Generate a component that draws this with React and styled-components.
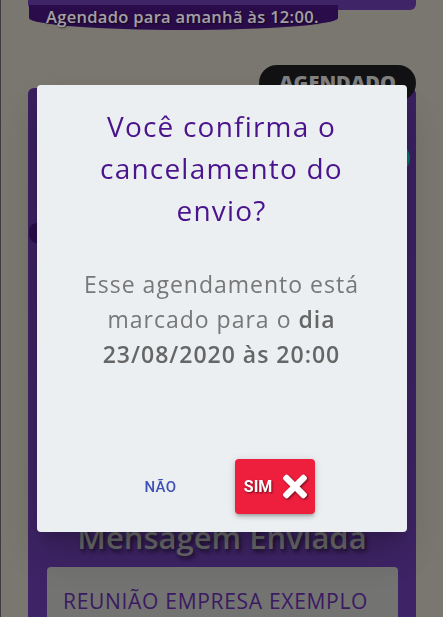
import React from 'react'
import styled, { createGlobalStyle } from 'styled-components'
import { FaTimes } from 'react-icons/fa'

const GlobalStyle = createGlobalStyle`
  html, body {
    margin: 0;
    height: 617px;
    overflow: hidden;
    font-family: "Open Sans", "Noto Sans", sans-serif;
  }
`

// página de fundo (lista de agendamentos)
const Page = styled.div`
  height: 617px;
  overflow: hidden;
  box-sizing: border-box;
  background: #b4afa6;
  border-left: 1px solid #5a5a5a;
  padding: 0 27px 0 27px;
  display: flex;
  flex-direction: column;
`

const CardTail = styled.div`
  flex-shrink: 0;
  height: 10px;
  background: #5d3698;
  border-radius: 0 0 6px 6px;
`

const ScheduleTag = styled.div`
  flex-shrink: 0;
  align-self: flex-start;
  margin: -5px 0 0 1px;
  width: 309px;
  height: 25px;
  box-sizing: border-box;
  padding-left: 17px;
  background: #3e136d;
  border-radius: 0 0 155px 155px / 0 0 12px 12px;
  color: #f2eaf2;
  font-size: 16.5px;
  font-weight: 600;
  line-height: 23px;
  letter-spacing: 0.3px;
  text-shadow: 1px 1px 2px rgba(0, 0, 0, 0.6);
  white-space: nowrap;
`

const Card = styled.section`
  flex-shrink: 0;
  position: relative;
  margin-top: 58px;
  height: 560px;
  background: linear-gradient(#532f8c, #5d3598);
  border-radius: 6px 6px 0 0;
  display: flex;
  flex-direction: column;
`

const StatusBadge = styled.div`
  position: absolute;
  top: -23px;
  right: 0;
  width: 157px;
  height: 36px;
  border-radius: 18px;
  background: #1a1a1c;
  color: #bdbdbd;
  font-size: 20px;
  font-weight: 800;
  text-align: center;
  line-height: 36px;
`

const RoundButton = styled.div`
  flex-shrink: 0;
  align-self: flex-end;
  margin: 55px 6px 0 0;
  width: 30px;
  height: 30px;
  border-radius: 50%;
  background: #12a0a0;
`

const InnerTag = styled.div`
  flex-shrink: 0;
  align-self: flex-start;
  margin: 50px 0 0 1px;
  width: 150px;
  height: 20px;
  border-radius: 8px;
  background: #3e136d;
`

const CardTitle = styled.h2`
  flex-shrink: 0;
  margin: 274px 0 0;
  text-align: center;
  font-size: 31px;
  font-weight: 600;
  line-height: 40px;
  color: #989898;
  text-shadow: 2px 3px 4px rgba(0, 0, 0, 0.6);
`

const MessageBox = styled.div`
  flex-shrink: 0;
  margin: 10px 18px 0 19px;
  height: 80px;
  padding: 20px 16px 0;
  background: #aaaaa9;
  border-radius: 4px;
  color: #57278f;
  font-size: 21px;
  letter-spacing: 0.7px;
  white-space: nowrap;
`

// diálogo de confirmação
const Overlay = styled.div`
  position: fixed;
  inset: 0;
  background: rgba(0, 0, 0, 0.32);
  display: flex;
  align-items: center;
  justify-content: center;
`

const Dialog = styled.div`
  width: 370px;
  box-sizing: border-box;
  padding: 20px 24px 18px;
  background: #eceff1;
  border-radius: 4px;
  box-shadow: 0 11px 15px -7px rgba(0, 0, 0, 0.2), 0 24px 38px 3px rgba(0, 0, 0, 0.14);
  text-align: center;
`

const Title = styled.h1`
  margin: 0;
  color: #4a148c;
  font-size: 28px;
  font-weight: 500;
  line-height: 42px;
  letter-spacing: 1.2px;
`

const Body = styled.p`
  margin: 36px 0 0;
  color: #777777;
  font-size: 23px;
  font-weight: 400;
  line-height: 35px;
  letter-spacing: 1px;

  strong {
    font-weight: 600;
    color: #666666;
  }
`

const Actions = styled.div`
  margin-top: 87px;
  display: flex;
  justify-content: center;
  align-items: center;
  gap: 42px;
`

const TextButton = styled.button`
  border: 0;
  background: none;
  padding: 8px 16px;
  font-family: Roboto, sans-serif;
  font-size: 15px;
  font-weight: 500;
  letter-spacing: 0.4px;
  color: #3f51b5;
`

const DangerButton = styled.button`
  width: 80px;
  height: 55px;
  border: 0;
  border-radius: 4px;
  background: #ee1e3d;
  box-shadow: 0 3px 3px -2px rgba(0, 0, 0, 0.2), 0 3px 4px 0 rgba(0, 0, 0, 0.14), 0 1px 8px 0 rgba(0, 0, 0, 0.12);
  display: flex;
  align-items: center;
  justify-content: center;
  gap: 11px;
  padding: 0 0 0 2px;
  color: #ffffff;
  font-family: Roboto, sans-serif;
  font-size: 16px;
  font-weight: 700;
  text-shadow: 1px 1px 2px rgba(0, 0, 0, 0.6);

  svg {
    width: 24px;
    height: 35px;
    filter: drop-shadow(1px 1px 1px rgba(0, 0, 0, 0.55));
  }
`

export default function App () {
  return <>
    <GlobalStyle />
    <Page>
      <CardTail />
      <ScheduleTag>Agendado para amanhã às 12:00.</ScheduleTag>
      <Card>
        <StatusBadge>AGENDADO</StatusBadge>
        <RoundButton />
        <InnerTag />
        <CardTitle>Mensagem Enviada</CardTitle>
        <MessageBox>REUNIÃO EMPRESA EXEMPLO</MessageBox>
      </Card>
    </Page>
    <Overlay>
      <Dialog role='dialog'>
        <Title>Você confirma o cancelamento do envio?</Title>
        <Body>
          Esse agendamento está marcado para o <strong>dia 23/08/2020 às 20:00</strong>
        </Body>
        <Actions>
          <TextButton>NÃO</TextButton>
          <DangerButton>SIM <FaTimes /></DangerButton>
        </Actions>
      </Dialog>
    </Overlay>
  </>
}
